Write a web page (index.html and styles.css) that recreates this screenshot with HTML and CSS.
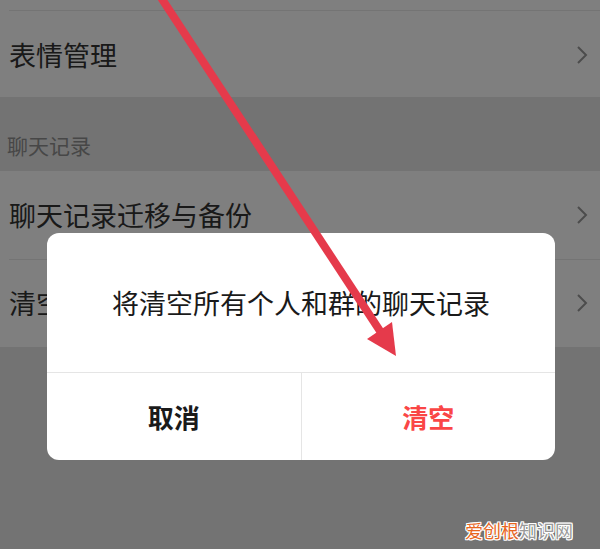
FILE: index.html
```html
<!DOCTYPE html>
<html lang="zh-CN">
<head>
    <meta charset="UTF-8">
    <meta name="viewport" content="width=device-width, initial-scale=1.0">
    <title>聊天</title>
    <link rel="stylesheet" href="styles.css">
</head>
<body>
    <div id="settings">
        <div class="group">
            <div class="cell cell-cut"></div>
            <div class="cell cell-low">
                <span class="cell-title">表情管理</span>
                <svg class="chevron" viewBox="0 0 12 20"><path d="M2 2 L10 10 L2 18"/></svg>
            </div>
        </div>

        <div class="section-title">聊天记录</div>

        <div class="group">
            <div class="cell">
                <span class="cell-title">聊天记录迁移与备份</span>
                <svg class="chevron" viewBox="0 0 12 20"><path d="M2 2 L10 10 L2 18"/></svg>
            </div>
            <div class="cell">
                <span class="cell-title">清空聊天记录</span>
                <svg class="chevron" viewBox="0 0 12 20"><path d="M2 2 L10 10 L2 18"/></svg>
            </div>
        </div>
    </div>

    <!-- modal -->
    <div class="mask"></div>
    <div class="dialog">
        <div class="dialog-body">将清空所有个人和群的聊天记录</div>
        <div class="dialog-actions">
            <button class="btn btn-cancel">取消</button>
            <button class="btn btn-danger">清空</button>
        </div>
    </div>

    <!-- pointer arrow -->
    <svg class="pointer" viewBox="0 0 600 549">
        <line x1="160" y1="-4" x2="382" y2="334" />
        <polygon points="396,356 392,322 367,339" />
    </svg>

    <div class="watermark"><span class="wm-a">爱创根</span><span class="wm-b">知识网</span></div>
</body>
</html>
```

FILE: styles.css
```css
/* CSS */
html, body {
    margin: 0;
    padding: 0;
}

body {
    width: 600px;
    height: 549px;
    overflow: hidden;
    position: relative;
    background: #e6e6e6;
    font-family: "Noto Sans CJK SC", "Noto Sans", sans-serif;
}

/* settings list */
.group {
    background: #fff;
}

.cell {
    position: relative;
    height: 88px;
    box-sizing: border-box;
    display: flex;
    align-items: center;
    justify-content: space-between;
    padding: 0 12px 0 9px;
}

.cell-cut {
    height: 10px;
}

.cell-low {
    height: 87px;
    padding-top: 3px;
}

.cell + .cell::before {
    content: "";
    position: absolute;
    left: 9px;
    right: 0;
    top: 0;
    height: 1px;
    background: #e8e8e8;
}

.cell-title {
    font-size: 27px;
    line-height: 36px;
    color: #333;
}

.chevron {
    width: 12px;
    height: 20px;
    fill: none;
    stroke: #999;
    stroke-width: 2;
}

.section-title {
    height: 74px;
    box-sizing: border-box;
    padding: 36px 0 0 7px;
    font-size: 21px;
    line-height: 24px;
    color: #8e8e8e;
}

/* modal */
.mask {
    position: absolute;
    inset: 0;
    background: rgba(0, 0, 0, 0.5);
}

.dialog {
    position: absolute;
    left: 47px;
    top: 233px;
    width: 508px;
    height: 227px;
    background: #fff;
    border-radius: 12px;
    overflow: hidden;
    display: flex;
    flex-direction: column;
}

.dialog-body {
    height: 139px;
    display: flex;
    align-items: center;
    justify-content: center;
    font-size: 27px;
    color: #1a1a1a;
}

.dialog-actions {
    flex: 1;
    display: flex;
    border-top: 1px solid #e5e5e5;
}

.btn {
    flex: 1;
    border: 0;
    background: none;
    font-family: inherit;
    font-size: 26px;
    font-weight: bold;
    padding: 0;
}

.btn + .btn {
    border-left: 1px solid #e5e5e5;
}

.btn-cancel {
    color: #1a1a1a;
}

.btn-danger {
    color: #fa4646;
}

/* arrow drawn over the screen */
.pointer {
    position: absolute;
    left: 0;
    top: 0;
    width: 600px;
    height: 549px;
    pointer-events: none;
}

.pointer line {
    stroke: #e53a4b;
    stroke-width: 8;
}

.pointer polygon {
    fill: #e53a4b;
}

.watermark {
    position: absolute;
    right: 27px;
    bottom: 8px;
    font-size: 18px;
    line-height: 22px;
    text-shadow: 1px 0 #fff, -1px 0 #fff, 0 1px #fff, 0 -1px #fff,
                 1px 1px #fff, -1px -1px #fff, 1px -1px #fff, -1px 1px #fff;
}

.wm-a {
    color: #e8661f;
}

.wm-b {
    color: #9a9a9a;
}
```
